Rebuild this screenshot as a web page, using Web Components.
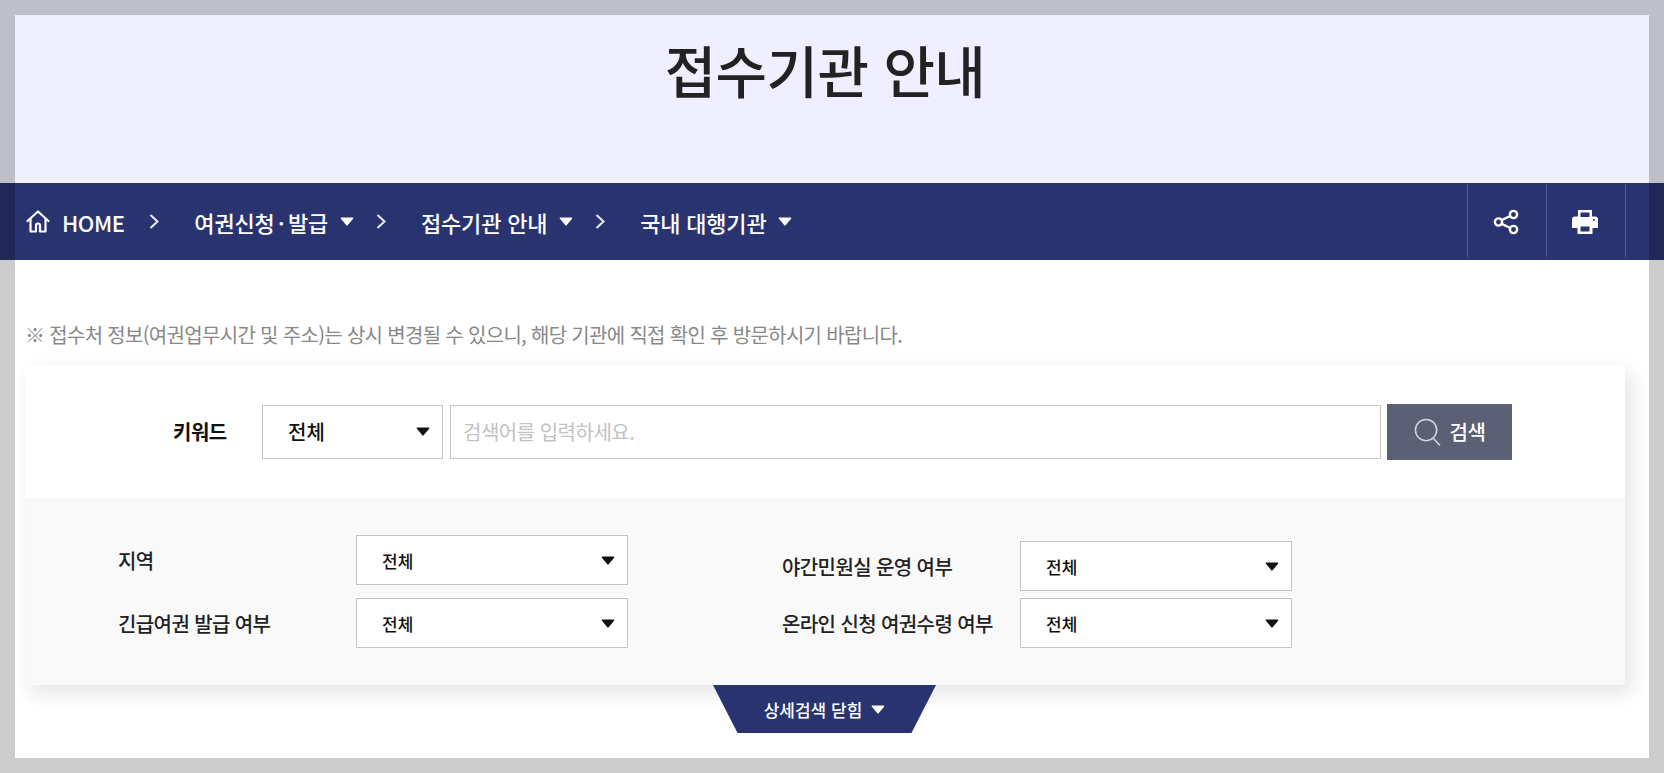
<!DOCTYPE html>
<html lang="ko">
<head>
<meta charset="utf-8">
<title>접수기관 안내</title>
<style>
  html, body { margin: 0; padding: 0; background: #fff; }
  body { font-family: "Noto Sans CJK KR", "Noto Sans", sans-serif; color: #222; height: 773px; overflow: hidden; position: relative; }
  .dot { margin: 0 3.500px; }
</style>
</head>
<body>
  <page-title>접수기관 안내</page-title>
  <bread-bar>
    <bread-crumb home>HOME</bread-crumb>
    <bread-crumb menu>여권신청<span class="dot">·</span>발급</bread-crumb>
    <bread-crumb menu>접수기관 안내</bread-crumb>
    <bread-crumb menu last>국내 대행기관</bread-crumb>
  </bread-bar>
  <page-note>※ 접수처 정보(여권업무시간 및 주소)는 상시 변경될 수 있으니, 해당 기관에 직접 확인 후 방문하시기 바랍니다.</page-note>
  <search-card>
    <select-box slot="keyword" size="lg">전체</select-box>
    <filter-row slot="left" label="지역"></filter-row>
    <filter-row slot="left" label="긴급여권 발급 여부"></filter-row>
    <filter-row slot="right" label="야간민원실 운영 여부"></filter-row>
    <filter-row slot="right" label="온라인 신청 여권수령 여부"></filter-row>
  </search-card>
  <fold-tab>상세검색 닫힘</fold-tab>
  <page-frame></page-frame>

<script>
  const caret = (w, h, fill) => `<svg width="${w}" height="${h}" viewBox="0 0 14 9" style="display:block;flex:none"><path d="M1.500 1.200h11L7 7.800z" fill="${fill}" stroke="${fill}" stroke-width="1.600" stroke-linejoin="round"/></svg>`;

  class PageTitle extends HTMLElement {
    constructor() {
      super();
      this.attachShadow({ mode: 'open' }).innerHTML = `
        <style>
          :host { display: block; height: 183px; background: #efefff; box-sizing: border-box; padding: 29px 14px 0 0; text-align: center; }
          h1 { margin: 0; font-size: 56px; line-height: 80px; font-weight: 500; color: #222; letter-spacing: -.6px; }
        </style>
        <h1><slot></slot></h1>`;
    }
  }
  customElements.define('page-title', PageTitle);

  class BreadBar extends HTMLElement {
    constructor() {
      super();
      this.attachShadow({ mode: 'open' }).innerHTML = `
        <style>
          :host { display: flex; align-items: center; height: 77px; background: #28336f; color: #fff; padding-left: 26px; box-sizing: border-box; }
          .crumbs { display: flex; align-items: center; flex: 1; }
          .tools { display: flex; align-self: flex-start; height: 73px; margin: 1px 38px 0 0; }
          .tool { width: 79px; display: flex; align-items: center; justify-content: center; border-left: 1px solid rgba(255,255,255,.2); padding: 3px 2px 0 0; box-sizing: border-box; }
          .tool.end { width: 1px; padding: 0; }
        </style>
        <div class="crumbs"><slot></slot></div>
        <div class="tools">
          <div class="tool">
            <svg width="26" height="26" viewBox="0 0 26 26" fill="none" stroke="#fff" stroke-width="2.400">
              <circle cx="5.500" cy="13" r="3.600"/><circle cx="20.500" cy="5.500" r="3.600"/><circle cx="20.500" cy="20.500" r="3.600"/>
              <path d="M8.700 11.200l8.600-4.200M8.700 14.800l8.600 4.200"/>
            </svg>
          </div>
          <div class="tool">
            <svg width="26" height="26" viewBox="0 0 26 26">
              <path fill="#fff" d="M6 1h14v6.500h3a3 3 0 0 1 3 3V19h-5.500v6h-15v-6H0v-8.500a3 3 0 0 1 3-3h3zM8.500 3.500v4.500h9V3.500zM8.500 17.500v5h9v-5z" fill-rule="evenodd"/>
              <circle cx="22" cy="11" r="1" fill="#28336f"/>
            </svg>
          </div>
          <div class="tool end"></div>
        </div>`;
    }
  }
  customElements.define('bread-bar', BreadBar);

  class BreadCrumb extends HTMLElement {
    constructor() {
      super();
      this.attachShadow({ mode: 'open' });
    }
    connectedCallback() {
      const home = this.hasAttribute('home');
      const menu = this.hasAttribute('menu');
      const last = this.hasAttribute('last');
      this.shadowRoot.innerHTML = `
        <style>
          :host { display: flex; align-items: center; font-size: 22px; line-height: 30px; font-weight: 500; color: #fff; white-space: nowrap; letter-spacing: ${home ? '-.5px' : '-.2px'}; }
          .home { margin-right: 12px; display: block; }
          .tri { margin-left: 12px; }
          .chev { margin: 0 35px 0 ${home ? 25 : 22}px; display: block; }
        </style>
        ${home ? `<svg class="home" width="24" height="23" viewBox="0 0 24 23" fill="none" stroke="#fff" stroke-width="2.200" stroke-linejoin="round" stroke-linecap="round"><path d="M1.500 11L12 1.500 22.500 11"/><path d="M4.500 9v12.500h5.500v-6a2 2 0 0 1 4 0v6h5.500V9"/></svg>` : ''}
        <slot></slot>
        ${menu ? `<span class="tri">${caret(14, 9, '#fff')}</span>` : ''}
        ${last ? '' : `<svg class="chev" width="10" height="15" viewBox="0 0 10 15" fill="none" stroke="#e4e6f0" stroke-width="2.200"><path d="M1.500 1l7 6.500-7 6.500"/></svg>`}`;
    }
  }
  customElements.define('bread-crumb', BreadCrumb);

  class PageNote extends HTMLElement {
    constructor() {
      super();
      this.attachShadow({ mode: 'open' }).innerHTML = `
        <style>
          :host { display: block; margin: 60px 0 0 25px; font-size: 20px; line-height: 30px; color: #888; white-space: nowrap; height: 45px; letter-spacing: -.68px; }
        </style>
        <slot></slot>`;
    }
  }
  customElements.define('page-note', PageNote);

  class SelectBox extends HTMLElement {
    constructor() {
      super();
      this.attachShadow({ mode: 'open' });
    }
    connectedCallback() {
      const lg = this.getAttribute('size') === 'lg';
      this.shadowRoot.innerHTML = `
        <style>
          :host { display: flex; align-items: center; justify-content: space-between; box-sizing: border-box; background: #fff; border: 1px solid #c4c4c4; color: #111;
            width: ${lg ? 181 : 272}px; height: ${lg ? 54 : 50}px; padding: 0 12px 0 25px; font-size: ${lg ? 20 : 17}px; font-weight: 500; flex: none; }
        </style>
        <slot></slot>${caret(14, 9, '#111')}`;
    }
  }
  customElements.define('select-box', SelectBox);

  class FilterRow extends HTMLElement {
    constructor() {
      super();
      this.attachShadow({ mode: 'open' });
    }
    connectedCallback() {
      this.shadowRoot.innerHTML = `
        <style>
          :host { display: flex; align-items: center; }
          .lbl { font-size: 20px; letter-spacing: -.6px; font-weight: 500; color: #222; flex: 1; white-space: nowrap; }
        </style>
        <span class="lbl">${this.getAttribute('label')}</span>
        <select-box>전체</select-box>`;
    }
  }
  customElements.define('filter-row', FilterRow);

  class SearchCard extends HTMLElement {
    constructor() {
      super();
      this.attachShadow({ mode: 'open' }).innerHTML = `
        <style>
          :host { display: block; margin: 0 39px 0 25px; background: #fff; box-shadow: 6px 8px 20px rgba(0,0,0,.11); height: 320px; }
          .top { display: flex; align-items: center; height: 133px; box-sizing: border-box; padding: 0 0 0 148px; }
          .key { font-size: 20px; letter-spacing: -.5px; font-weight: 700; color: #111; width: 89px; flex: none; }
          .field { width: 931px; height: 54px; box-sizing: border-box; border: 1px solid #c4c4c4; margin-left: 7px; display: flex; align-items: center; padding-left: 12px; font-size: 20px; letter-spacing: -.5px; color: #c2c2c2; flex: none; }
          button { all: unset; box-sizing: border-box; width: 125px; height: 56px; margin-left: 6px; background: #5c6074; color: #fff; font-size: 20px; letter-spacing: -.5px; font-weight: 500; display: flex; align-items: center; justify-content: center; gap: 9px; flex: none; }
          .bottom { background: #f9f9f9; height: 187px; box-sizing: border-box; padding: 37px 0 0 93px; display: flex; }
          .col { display: flex; flex-direction: column; height: 113px; }
          .left { width: 510px; gap: 13px; }
          .right { width: 510px; margin-left: 154px; justify-content: flex-end; gap: 7px; }
        </style>
        <div class="top">
          <span class="key">키워드</span>
          <slot name="keyword"></slot>
          <div class="field">검색어를 입력하세요.</div>
          <button>
            <svg width="27" height="28" viewBox="0 0 28 29" fill="none" stroke="#d4d6de" stroke-width="1.600"><circle cx="12.500" cy="12.500" r="11"/><path d="M20 21l7 7.500"/></svg>
            <span>검색</span>
          </button>
        </div>
        <div class="bottom">
          <div class="col left"><slot name="left"></slot></div>
          <div class="col right"><slot name="right"></slot></div>
        </div>`;
    }
  }
  customElements.define('search-card', SearchCard);

  class FoldTab extends HTMLElement {
    constructor() {
      super();
      this.attachShadow({ mode: 'open' }).innerHTML = `
        <style>
          :host { display: flex; align-items: center; justify-content: center; gap: 9px; position: relative; width: 223px; height: 48px; margin-left: 713px; background: #28336f; color: #fff;
            clip-path: polygon(0 0, 100% 0, 89% 100%, 11% 100%); font-size: 17px; font-weight: 500; }
        </style>
        <slot></slot>${caret(14, 9, '#fff')}`;
    }
  }
  customElements.define('fold-tab', FoldTab);

  class PageFrame extends HTMLElement {
    constructor() {
      super();
      this.attachShadow({ mode: 'open' }).innerHTML = `
        <style>
          :host { position: absolute; inset: 0; box-sizing: border-box; border: 15px solid rgba(0,0,0,.2); pointer-events: none; }
        </style>`;
    }
  }
  customElements.define('page-frame', PageFrame);
</script>
</body>
</html>
